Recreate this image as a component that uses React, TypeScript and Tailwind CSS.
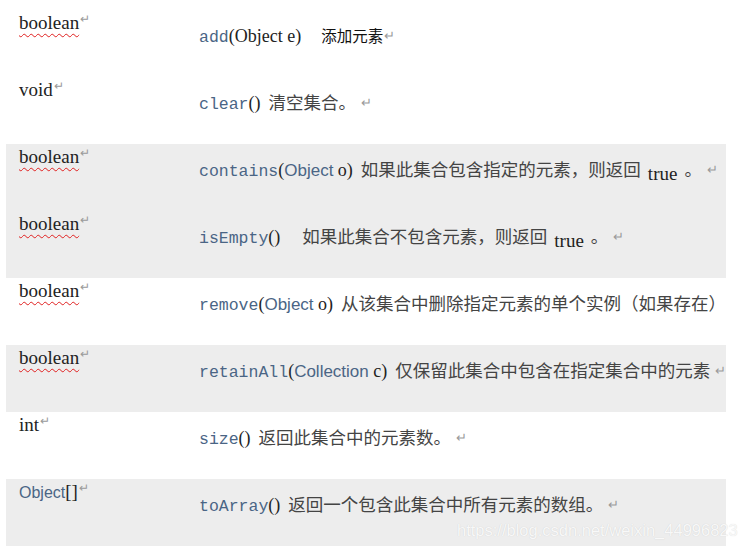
import React from 'react';

const serif = "font-['Liberation_Serif','Noto_Sans_CJK_SC',serif]";
const mono = "font-['Liberation_Mono','DejaVu_Sans_Mono',monospace]";
const sans = "font-['Liberation_Sans','Noto_Sans_CJK_SC',sans-serif]";
const cjk = "font-['Noto_Sans_CJK_SC',sans-serif]";

function Ret() {
  return <span className={`${sans} text-[13px] text-[#9a9a9a] align-[2px] ml-[1px]`}>↵</span>;
}

function TypeCell({ wavy, children }: { wavy?: boolean; children: React.ReactNode }) {
  return (
    <div className="w-[193px] shrink-0 pl-[13px] pt-0 leading-[18px] whitespace-nowrap">
      <span
        className={`${serif} text-[19px] text-[#222] ${wavy ? 'underline decoration-wavy decoration-[#e02020] decoration-1 underline-offset-[4px]' : ''}`}
      >
        {children}
      </span>
      <span className={`${sans} text-[12px] text-[#9a9a9a] align-[6px] ml-[1px]`}>↵</span>
    </div>
  );
}

function Code({ children }: { children: React.ReactNode }) {
  return <span className={`${mono} text-[16.5px] text-[#4a6585]`}>{children}</span>;
}

function Blue({ children }: { children: React.ReactNode }) {
  return <span className={`${sans} text-[17px] text-[#4a6585]`}>{children}</span>;
}

function Dark({ children }: { children: React.ReactNode }) {
  return <span className={`${serif} text-[18px] text-[#222]`}>{children}</span>;
}

function Zh({ children }: { children: React.ReactNode }) {
  return <span className={`${cjk} text-[17.5px] text-[#444]`}>{children}</span>;
}

function True() {
  return <span className={`${serif} text-[19px] text-[#222] align-[-4px] mx-[7px]`}>true</span>;
}

const rows: { type: React.ReactNode; wavy?: boolean; gray?: boolean; body: React.ReactNode }[] = [
  {
    type: 'boolean',
    wavy: true,
    body: (
      <>
        <Code>add</Code>
        <Dark>(Object e)</Dark>
        <span className={`${cjk} text-[15.5px] text-[#111] ml-[20px]`}>添加元素</span>
        <Ret />
      </>
    ),
  },
  {
    type: 'void',
    body: (
      <>
        <Code>clear</Code>
        <Dark>()</Dark>
        <span className="ml-[8px]" />
        <Zh>清空集合。</Zh>
        <span className="ml-[4px]" />
        <Ret />
      </>
    ),
  },
  {
    type: 'boolean',
    wavy: true,
    gray: true,
    body: (
      <>
        <Code>contains</Code>
        <Dark>(</Dark>
        <Blue>Object</Blue>
        <Dark> o)</Dark>
        <span className="ml-[8px]" />
        <Zh>如果此集合包含指定的元素，则返回</Zh>
        <True />
        <Zh>。</Zh>
        <span className="ml-[4px]" />
        <Ret />
      </>
    ),
  },
  {
    type: 'boolean',
    wavy: true,
    gray: true,
    body: (
      <>
        <Code>isEmpty</Code>
        <Dark>()</Dark>
        <span className="ml-[22px]" />
        <Zh>如果此集合不包含元素，则返回</Zh>
        <True />
        <Zh>。</Zh>
        <span className="ml-[4px]" />
        <Ret />
      </>
    ),
  },
  {
    type: 'boolean',
    wavy: true,
    body: (
      <>
        <Code>remove</Code>
        <Dark>(</Dark>
        <Blue>Object</Blue>
        <Dark> o)</Dark>
        <span className="ml-[8px]" />
        <Zh>从该集合中删除指定元素的单个实例（如果存在）</Zh>
        <Ret />
      </>
    ),
  },
  {
    type: 'boolean',
    wavy: true,
    gray: true,
    body: (
      <>
        <Code>retainAll</Code>
        <Dark>(</Dark>
        <Blue>Collection</Blue>
        <Dark> c)</Dark>
        <span className="ml-[8px]" />
        <Zh>仅保留此集合中包含在指定集合中的元素</Zh>
        <span className="ml-[4px]" />
        <Ret />
      </>
    ),
  },
  {
    type: 'int',
    body: (
      <>
        <Code>size</Code>
        <Dark>()</Dark>
        <span className="ml-[8px]" />
        <Zh>返回此集合中的元素数。</Zh>
        <span className="ml-[4px]" />
        <Ret />
      </>
    ),
  },
  {
    type: (
      <>
        <span className={`${sans} text-[16px] text-[#4a6585]`}>Object</span>[]
      </>
    ),
    gray: true,
    body: (
      <>
        <Code>toArray</Code>
        <Dark>()</Dark>
        <span className="ml-[8px]" />
        <Zh>返回一个包含此集合中所有元素的数组。</Zh>
        <span className="ml-[4px]" />
        <Ret />
      </>
    ),
  },
];

export default function App() {
  return (
    <div className="relative w-[738px] h-[550px] bg-white overflow-hidden">
      <div className="pt-[10px] px-[6px]">
        <div className="w-[720px] flex flex-col">
          {rows.map((row, i) => (
            <div key={i} className={`h-[67px] flex overflow-hidden ${row.gray ? 'bg-[#ededed]' : 'bg-white'}`}>
              <TypeCell wavy={row.wavy}>{row.type}</TypeCell>
              <div className="pt-[13px] leading-[24px] whitespace-nowrap">{row.body}</div>
            </div>
          ))}
        </div>
      </div>
      <div
        className={`absolute left-[457px] top-[519px] ${sans} text-[16.5px] leading-[22px] text-[#f8f8f8] whitespace-nowrap [text-shadow:0_0_1px_rgba(0,0,0,0.15)]`}
      >
        https://blog.csdn.net/weixin_44996823
      </div>
    </div>
  );
}
